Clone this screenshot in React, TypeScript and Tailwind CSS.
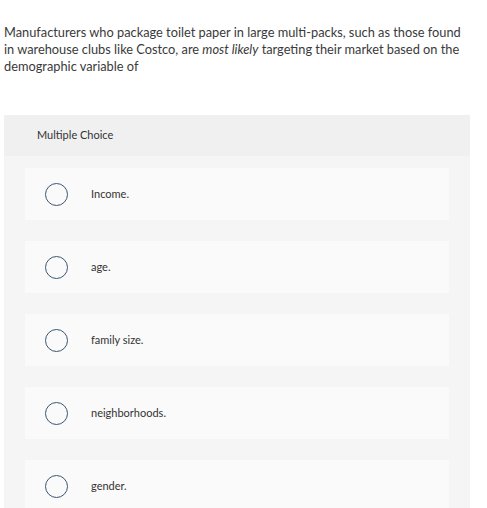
const choices = ["Income.", "age.", "family size.", "neighborhoods.", "gender."];

export default function App() {
  return (
    <div className="min-h-screen bg-white pt-[24px] text-[#333]" style={{ fontFamily: "Lato, 'Open Sans', sans-serif" }}>
      <p className="ml-[4px] w-[466px] text-[12.8px] leading-[17px] text-[#3a3a3a]">
        Manufacturers who package toilet paper in large multi-packs, such as those found in warehouse clubs like Costco, are{" "}
        <em>most likely</em> targeting their market based on the demographic variable of
      </p>

      <div className="ml-[4px] mt-[40px] w-[466px] bg-[#f5f5f5]">
        <div className="flex h-[41px] items-center bg-[#f0f0f0] px-[33px] text-[11px] text-[#333]">Multiple Choice</div>
        <div className="flex flex-col gap-[21px] px-[21px] pt-[12px]">
          {choices.map((c) => (
            <div key={c} className="flex h-[52px] items-center bg-[#fafafa] pl-[20px]">
              <span className="h-[23px] w-[23px] shrink-0 rounded-full border-[1.5px] border-[#3b5572]" />
              <span className="ml-[23px] text-[11px] text-[#333]">{c}</span>
            </div>
          ))}
        </div>
      </div>
    </div>
  );
}
